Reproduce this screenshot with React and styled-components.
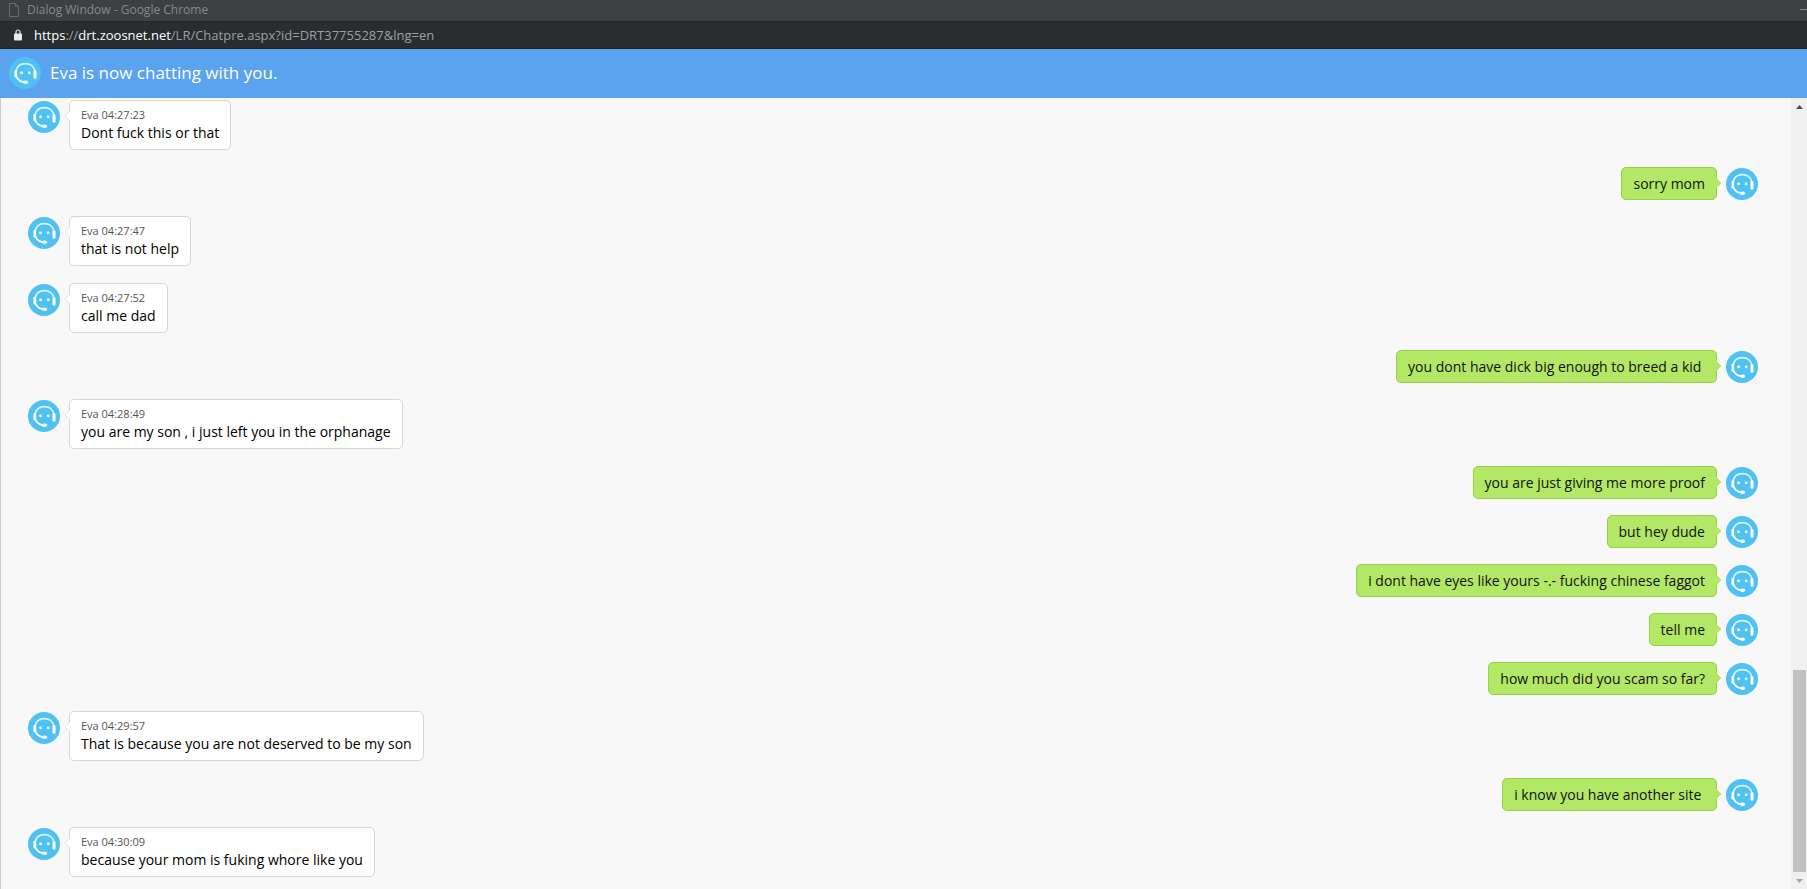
import styled, { createGlobalStyle } from "styled-components";

const messages = [
  { time: "04:27:23", text: "Dont fuck this or that" },
  { own: true, text: "sorry mom" },
  { time: "04:27:47", text: "that is not help" },
  { time: "04:27:52", text: "call me dad" },
  { own: true, text: "you dont have dick big enough to breed a kid " },
  { time: "04:28:49", text: "you are my son , i just left you in the orphanage" },
  { own: true, text: "you are just giving me more proof" },
  { own: true, text: "but hey dude" },
  { own: true, text: "i dont have eyes like yours -.- fucking chinese faggot" },
  { own: true, text: "tell me" },
  { own: true, text: "how much did you scam so far?" },
  { time: "04:29:57", text: "That is because you are not deserved to be my son" },
  { own: true, text: "i know you have another site " },
  { time: "04:30:09", text: "because your mom is fuking whore like you" },
];

const HeadsetAvatar = () => (
  <Avatar viewBox="0 0 32 32" aria-hidden="true">
    <circle cx="16" cy="16" r="16" fill="#50c1f3" />
    <path d="M7.2 14.5C7.8 9.6 11.4 6.6 16.4 6.6s8.8 3 9.4 7.9" fill="none" stroke="#dcf3fd" strokeWidth="1.6" />
    <path d="M6.8 14v5.2" stroke="#fff" strokeWidth="2.6" strokeLinecap="round" />
    <path d="M26 14.6v5.6" stroke="#fff" strokeWidth="3" strokeLinecap="round" />
    <path d="M7.4 19.2c1.2 3.4 4 5.6 8 6" fill="none" stroke="#fff" strokeWidth="1.8" />
    <ellipse cx="16.6" cy="25.2" rx="2.6" ry="1.8" fill="#fff" />
    <circle cx="12.6" cy="15.8" r="1.5" fill="#e4f6fe" />
    <circle cx="20.2" cy="15.8" r="1.5" fill="#e4f6fe" />
  </Avatar>
);

const Message = ({ own, time, text }) => (
  <Row $own={own}>
    <HeadsetAvatar />
    <Bubble $own={own}>
      {time && <Meta>Eva {time}</Meta>}
      <Text>{text}</Text>
      <Tail $own={own} viewBox="0 0 6 10" aria-hidden="true">
        <path d="M0 0L5 5L0 10" />
      </Tail>
    </Bubble>
  </Row>
);

const App = () => {
  return (
    <Window>
      <GlobalStyle />
      <TitleBar>
        <PageIcon viewBox="0 0 10 14" aria-hidden="true">
          <path d="M.5 .5h6l3 3v10h-9zM6.5 .5v3h3" />
        </PageIcon>
        <span>Dialog Window - Google Chrome</span>
        <Minimize type="button" aria-label="Minimize" />
      </TitleBar>
      <AddressBar>
        <LockIcon viewBox="0 0 8 12" aria-hidden="true">
          <path d="M2 5V3a2 2 0 0 1 4 0v2" fill="none" stroke="#e8eaed" strokeWidth="1.2" />
          <rect y="4.5" width="8" height="7" rx="1" fill="#e8eaed" />
        </LockIcon>
        <Url>
          <b>https</b>://<b>drt.zoosnet.net</b>/LR/Chatpre.aspx?id=DRT37755287&amp;lng=en
        </Url>
      </AddressBar>
      <Header>
        <HeadsetAvatar />
        <Heading>Eva is now chatting with you.</Heading>
      </Header>
      <Content>
        <Messages>
          {messages.map((message, i) => (
            <Message key={i} {...message} />
          ))}
        </Messages>
        <Scrollbar>
          <ScrollButton type="button" aria-label="Scroll up">
            <svg width="7" height="4" viewBox="0 0 7 4">
              <path d="M0 4L3.5 0L7 4z" fill="#505050" />
            </svg>
          </ScrollButton>
          <Track>
            <Thumb />
          </Track>
          <ScrollButton type="button" aria-label="Scroll down">
            <svg width="7" height="4" viewBox="0 0 7 4">
              <path d="M0 0L3.5 4L7 0z" fill="#a3a3a3" />
            </svg>
          </ScrollButton>
        </Scrollbar>
      </Content>
    </Window>
  );
};

export default App;

const GlobalStyle = createGlobalStyle`
  * {
    box-sizing: border-box;
  }
  body {
    margin: 0;
    font-family: "Open Sans", "Noto Sans", sans-serif;
    background-color: #f8f8f8;
  }
`;
const Window = styled.div`
  min-height: 100vh;
  display: flex;
  flex-direction: column;
`;
const TitleBar = styled.div`
  height: 22px;
  padding: 0 0 2px 9px;
  display: flex;
  align-items: center;
  gap: 8px;
  color: #85888a;
  background-color: #3c4043;
  border-bottom: 1px solid #222628;
  font-size: 12px;
  line-height: 16px;
`;
const PageIcon = styled.svg`
  width: 10px;
  height: 14px;
  fill: none;
  stroke: #696c6e;
`;
const Minimize = styled.button`
  width: 7px;
  height: 1px;
  margin-left: auto;
  padding: 0;
  border: none;
  background-color: #85888a;
`;
const AddressBar = styled.div`
  height: 27px;
  padding-left: 14px;
  display: flex;
  align-items: center;
  gap: 12px;
  background-color: #292d30;
  border-bottom: 1px solid #202426;
`;
const LockIcon = styled.svg`
  width: 8px;
  height: 12px;
`;
const Url = styled.span`
  color: #9aa0a6;
  font-size: 13px;
  line-height: 18px;
  b {
    color: #fff;
    font-weight: 400;
  }
`;
const Header = styled.header`
  height: 49px;
  padding: 0 9px 2px;
  display: flex;
  align-items: center;
  gap: 9px;
  background-color: #5ba3ee;
`;
const Heading = styled.h1`
  margin: 0;
  color: #fff;
  font-size: 17px;
  font-weight: 400;
  line-height: 24px;
`;
const Avatar = styled.svg`
  width: 32px;
  height: 32px;
  flex-shrink: 0;
`;
const Content = styled.div`
  flex: 1;
  display: flex;
`;
const Messages = styled.main`
  flex: 1;
  padding: 2px 33px 0 27px;
  border-left: 1px solid #ccc;
`;
const Row = styled.div`
  display: flex;
  flex-direction: ${({ $own }) => ($own ? "row-reverse" : "row")};
  gap: 9px;
  margin-bottom: ${({ $own }) => ($own ? "16px" : "17px")};
  &:last-child {
    margin-bottom: 0;
  }
  > svg {
    margin-top: 1px;
  }
`;
const Bubble = styled.div`
  position: relative;
  padding: ${({ $own }) => ($own ? "6px 11px" : "5px 11px 7px")};
  color: ${({ $own }) => ($own ? "#111" : "#000")};
  background-color: ${({ $own }) => ($own ? "#b2e866" : "#fff")};
  border: 1px solid ${({ $own }) => ($own ? "#96d243" : "#d6d6d6")};
  border-radius: 5px;
`;
const Meta = styled.div`
  color: #555;
  font-size: 11px;
  line-height: 17px;
`;
const Text = styled.div`
  font-size: 14px;
  line-height: 19px;
  white-space: pre-wrap;
`;
const Tail = styled.svg`
  position: absolute;
  top: 10px;
  ${({ $own }) => ($own ? "left: 100%;" : "right: 100%; transform: scaleX(-1);")}
  width: 6px;
  height: 10px;
  fill: ${({ $own }) => ($own ? "#b2e866" : "#fff")};
  stroke: ${({ $own }) => ($own ? "#b2e866" : "#e2e2e2")};
`;
const Scrollbar = styled.div`
  width: 16px;
  display: flex;
  flex-direction: column;
  background-color: #f0f0f0;
`;
const ScrollButton = styled.button`
  height: 17px;
  padding: 0 0 0 1px;
  border: none;
  background: none;
  display: flex;
  align-items: center;
  justify-content: center;
`;
const Track = styled.div`
  flex: 1;
  display: flex;
  align-items: flex-end;
  padding: 0 1px 0 2px;
`;
const Thumb = styled.div`
  flex: 1;
  height: 26.7%;
  background-color: #c1c1c1;
`;
